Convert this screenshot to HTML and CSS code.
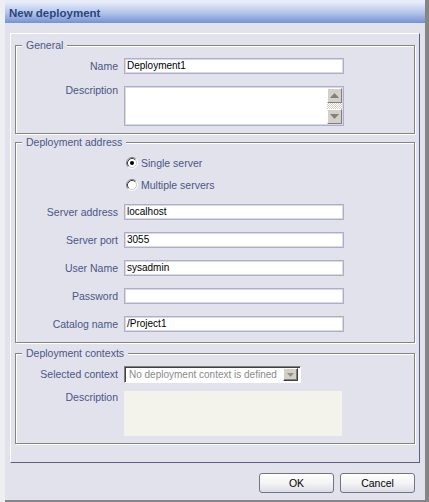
FILE: index.html
```html
<!DOCTYPE html>
<html>
<head>
<meta charset="utf-8">
<title>New deployment</title>
<link rel="stylesheet" href="styles.css">
</head>
<body>
<div class="screen">
  <div class="dialog">
    <div class="titlebar">New deployment</div>
    <div class="dialog-body">
      <div class="panel">
        <fieldset class="group group-general">
          <legend>General</legend>
          <div class="row">
            <span class="lbl">Name</span>
            <div class="field">Deployment1</div>
          </div>
          <div class="row row-top row-gap">
            <span class="lbl lbl-up">Description</span>
            <div class="field textarea">
              <div class="scrollbar">
                <div class="sb-btn"><svg width="9" height="5" viewBox="0 0 9 5"><path d="M0 5 L4.5 0 L9 5 Z" fill="#808080"/></svg></div>
                <div class="sb-track"></div>
                <div class="sb-btn"><svg width="9" height="5" viewBox="0 0 9 5"><path d="M0 0 L9 0 L4.5 5 Z" fill="#808080"/></svg></div>
              </div>
            </div>
          </div>
        </fieldset>

        <fieldset class="group group-address">
          <legend>Deployment address</legend>
          <div class="row">
            <span class="lbl"></span>
            <div class="radio">
              <svg width="12" height="12" viewBox="0 0 12 12">
                <circle cx="6" cy="6" r="4.5" fill="#fff"/>
                <path d="M2.11 9.89 A5.5 5.5 0 0 1 9.89 2.11" fill="none" stroke="#808080"/>
                <path d="M9.89 2.11 A5.5 5.5 0 0 1 2.11 9.89" fill="none" stroke="#fff"/>
                <path d="M2.82 9.18 A4.5 4.5 0 0 1 9.18 2.82" fill="none" stroke="#404040"/>
                <path d="M9.18 2.82 A4.5 4.5 0 0 1 2.82 9.18" fill="none" stroke="#d4d0c8"/>
                <circle cx="6" cy="6" r="2" fill="#000"/>
              </svg>
              <span>Single server</span>
            </div>
          </div>
          <div class="row row-radio">
            <span class="lbl"></span>
            <div class="radio">
              <svg width="12" height="12" viewBox="0 0 12 12">
                <circle cx="6" cy="6" r="4.5" fill="#fff"/>
                <path d="M2.11 9.89 A5.5 5.5 0 0 1 9.89 2.11" fill="none" stroke="#808080"/>
                <path d="M9.89 2.11 A5.5 5.5 0 0 1 2.11 9.89" fill="none" stroke="#fff"/>
                <path d="M2.82 9.18 A4.5 4.5 0 0 1 9.18 2.82" fill="none" stroke="#404040"/>
                <path d="M9.18 2.82 A4.5 4.5 0 0 1 2.82 9.18" fill="none" stroke="#d4d0c8"/>
              </svg>
              <span>Multiple servers</span>
            </div>
          </div>
          <div class="row row-after-radio">
            <span class="lbl">Server address</span>
            <div class="field">localhost</div>
          </div>
          <div class="row row-gap">
            <span class="lbl">Server port</span>
            <div class="field">3055</div>
          </div>
          <div class="row row-gap">
            <span class="lbl">User Name</span>
            <div class="field">sysadmin</div>
          </div>
          <div class="row row-gap">
            <span class="lbl">Password</span>
            <div class="field"></div>
          </div>
          <div class="row row-gap">
            <span class="lbl">Catalog name</span>
            <div class="field">/Project1</div>
          </div>
        </fieldset>

        <fieldset class="group group-contexts">
          <legend>Deployment contexts</legend>
          <div class="row">
            <span class="lbl">Selected context</span>
            <div class="select">
              <span class="select-text">No deployment context is defined</span>
              <span class="select-btn"><svg width="7" height="4" viewBox="0 0 7 4"><path d="M0 0 L7 0 L3.5 4 Z" fill="#909090"/></svg></span>
            </div>
          </div>
          <div class="row row-top row-ctx">
            <span class="lbl">Description</span>
            <div class="readonly-area"></div>
          </div>
        </fieldset>
      </div>
      <div class="buttons">
        <button class="btn">OK</button>
        <button class="btn">Cancel</button>
      </div>
    </div>
  </div>
</div>
</body>
</html>
```
FILE: styles.css
```css
html, body {
  margin: 0;
  padding: 0;
}

body {
  background: #eeeff3;
  font-family: "Liberation Sans", Arial, sans-serif;
  font-size: 10.5px;
  color: #000;
}

.screen {
  height: 502px;
  padding-left: 5px;
  box-sizing: border-box;
  display: flex;
  background: #eeeff3;
}

.dialog {
  width: 424px;
  display: flex;
  flex-direction: column;
  background: #e2e2ec;
  border-right: 4px solid #858585;
  border-bottom: 2px solid #858585;
  padding-top: 3px;
  background-clip: padding-box;
  box-shadow: inset 0 3px 0 #e8ecf6;
}

.titlebar {
  height: 20px;
  line-height: 20px;
  padding-left: 4px;
  background: linear-gradient(#e0e8fa, #b8c8ec 45%, #7592d0);
  color: #29467c;
  font-weight: bold;
  font-size: 11.5px;
}

.dialog-body {
  padding: 10px 5px 7px 5px;
  display: flex;
  flex-direction: column;
}

.panel {
  height: 430px;
  box-sizing: border-box;
  border: 1px solid;
  border-color: #ffffff #5e5e86 #5e5e86 #ffffff;
  padding: 0 4px;
}

.group {
  margin: 0;
  padding: 0 0 7px 0;
  border: 1px solid #848484;
  box-shadow: 1px 1px 0 #ffffff, inset 1px 1px 0 #ffffff;
  min-width: 0;
}

.group legend {
  margin-left: 6px;
  padding: 0 4px;
  line-height: 15px;
  height: 15px;
  color: #4c5784;
  background: #e2e2ec;
}

.group-general {
  margin-top: 4px;
}

.group-address {
  margin-top: 1px;
  padding-bottom: 10px;
}

.group-contexts {
  margin-top: 3px;
}

.row {
  display: flex;
  align-items: center;
  gap: 6px;
  margin-top: 5px;
}

.row-top {
  align-items: flex-start;
}

.row-gap {
  margin-top: 12px;
}

.row-radio {
  margin-top: 6px;
}

.row-after-radio {
  margin-top: 11px;
}

.row-ctx {
  margin-top: 8px;
}

.lbl {
  width: 102px;
  flex: none;
  text-align: right;
  line-height: 13px;
  color: #4a5686;
}

.lbl-up {
  margin-top: -2px;
}

.field {
  width: 220px;
  height: 16px;
  box-sizing: border-box;
  border: 1px solid #aeaecb;
  box-shadow: inset 0 0 0 1px #d8d8e6;
  background: #ffffff;
  padding-left: 2px;
  font-size: 10px;
  line-height: 14px;
  color: #000;
}

.textarea {
  height: 40px;
  display: flex;
  justify-content: flex-end;
  padding: 1px;
}

.scrollbar {
  width: 15px;
  display: flex;
  flex-direction: column;
}

.sb-btn {
  height: 15px;
  box-sizing: border-box;
  background: #d4d0c8;
  border: 1px solid;
  border-color: #ffffff #808080 #808080 #ffffff;
  display: flex;
  align-items: center;
  justify-content: center;
}

.sb-track {
  flex: 1;
  background: repeating-conic-gradient(#d4d0c8 0 25%, #ffffff 0 50%) 0 0 / 2px 2px;
}

.radio {
  display: flex;
  align-items: center;
  gap: 3px;
  height: 16px;
  margin-left: 2px;
  color: #4a5686;
  line-height: 13px;
}

.radio svg {
  display: block;
}

.select {
  width: 177px;
  height: 17px;
  box-sizing: border-box;
  background: #ffffff;
  border: 1px solid;
  border-color: #808080 #ffffff #ffffff #808080;
  box-shadow: inset 1px 1px 0 #404040;
  display: flex;
  align-items: center;
  padding: 0 2px 0 4px;
  margin-top: 0;
}

.select-text {
  flex: 1;
  font-size: 10px;
  color: #8a8a8a;
  white-space: nowrap;
  overflow: hidden;
}

.select-btn {
  width: 15px;
  height: 13px;
  box-sizing: border-box;
  background: #d4d0c8;
  border: 1px solid;
  border-color: #ffffff #404040 #404040 #ffffff;
  box-shadow: inset -1px -1px 0 #808080;
  display: flex;
  align-items: center;
  justify-content: center;
}

.readonly-area {
  width: 218px;
  height: 45px;
  background: #f3f3ec;
}

.buttons {
  display: flex;
  justify-content: flex-end;
  gap: 6px;
  margin-top: 10px;
  padding-right: 5px;
}

.btn {
  width: 75px;
  height: 20px;
  box-sizing: border-box;
  border: 1px solid #737384;
  border-radius: 3px;
  background: linear-gradient(#ffffff, #f4f4f6 50%, #dcdce6);
  font-family: "Liberation Sans", Arial, sans-serif;
  font-size: 10.5px;
  color: #000;
  padding: 0;
}
```
